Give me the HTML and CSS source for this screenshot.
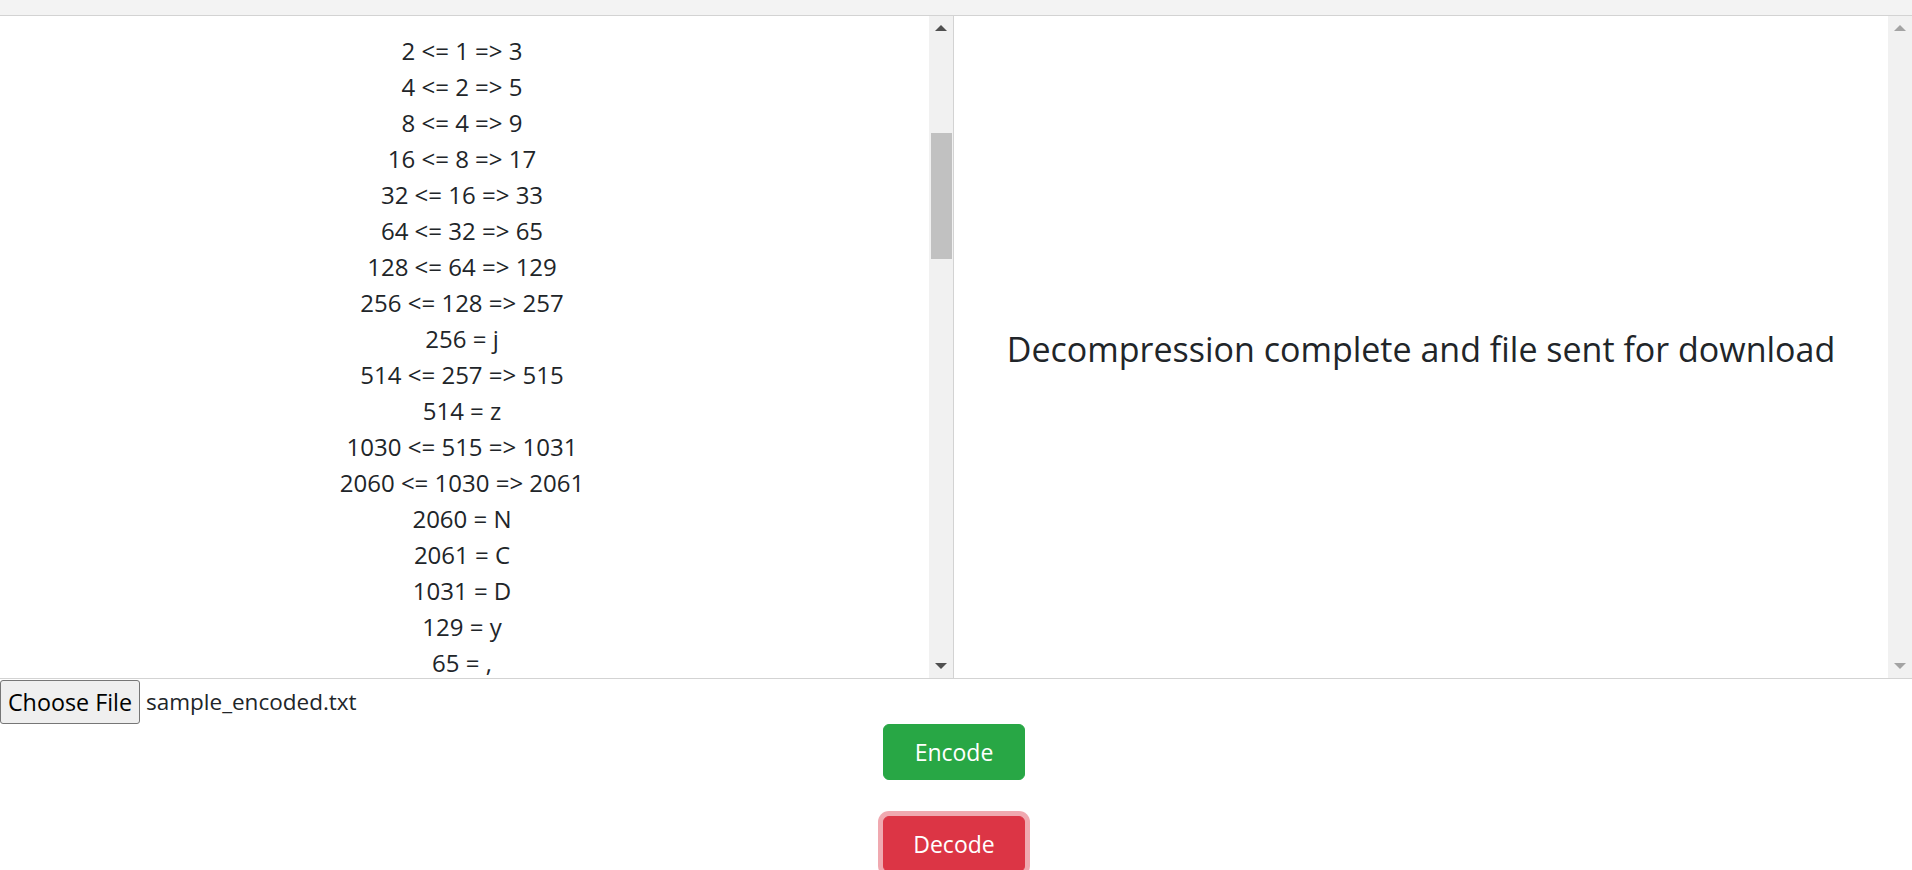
FILE: index.html
```html
<!DOCTYPE html>
<html lang="en">
<head>
<meta charset="utf-8">
<title>Huffman Decoder</title>
<link rel="stylesheet" href="styles.css">
</head>
<body>
<div class="topbar"></div>
<main class="panels">
  <section class="panel panel-log">
    <div class="view log">
      <p class="row">2 &lt;= 1 =&gt; 3</p>
      <p class="row">4 &lt;= 2 =&gt; 5</p>
      <p class="row">8 &lt;= 4 =&gt; 9</p>
      <p class="row">16 &lt;= 8 =&gt; 17</p>
      <p class="row">32 &lt;= 16 =&gt; 33</p>
      <p class="row">64 &lt;= 32 =&gt; 65</p>
      <p class="row">128 &lt;= 64 =&gt; 129</p>
      <p class="row">256 &lt;= 128 =&gt; 257</p>
      <p class="row">256 = j</p>
      <p class="row">514 &lt;= 257 =&gt; 515</p>
      <p class="row">514 = z</p>
      <p class="row">1030 &lt;= 515 =&gt; 1031</p>
      <p class="row">2060 &lt;= 1030 =&gt; 2061</p>
      <p class="row">2060 = N</p>
      <p class="row">2061 = C</p>
      <p class="row">1031 = D</p>
      <p class="row">129 = y</p>
      <p class="row">65 = ,</p>
    </div>
    <div class="scrollbar">
      <div class="sb-btn"><svg width="12" height="6" viewBox="0 0 12 6"><polygon points="0,6 6,0 12,6"/></svg></div>
      <div class="sb-track"><div class="sb-thumb" style="margin-top:93px;height:126px"></div></div>
      <div class="sb-btn"><svg width="12" height="6" viewBox="0 0 12 6"><polygon points="0,0 12,0 6,6"/></svg></div>
    </div>
  </section>
  <section class="panel panel-result">
    <div class="view result">
      <h4 class="result-text">Decompression complete and file sent for download</h4>
    </div>
    <div class="scrollbar scrollbar-disabled">
      <div class="sb-btn"><svg width="12" height="6" viewBox="0 0 12 6"><polygon points="0,6 6,0 12,6"/></svg></div>
      <div class="sb-track"></div>
      <div class="sb-btn"><svg width="12" height="6" viewBox="0 0 12 6"><polygon points="0,0 12,0 6,6"/></svg></div>
    </div>
  </section>
</main>
<div class="controls">
  <div class="file-row">
    <span class="file-btn">Choose File</span>
    <span class="file-name">sample_encoded.txt</span>
  </div>
  <div class="actions">
    <button class="btn btn-encode" type="button">Encode</button>
    <button class="btn btn-decode" type="button">Decode</button>
  </div>
</div>
</body>
</html>
```

FILE: styles.css
```css
* { box-sizing: border-box; }

html, body {
  margin: 0;
  padding: 0;
  background: #fff;
  overflow: hidden;
}

body {
  font-family: "Open Sans", "Noto Sans", sans-serif;
  color: #212529;
  font-size: 24px;
  line-height: 36px;
}

.topbar {
  height: 15px;
  background: #f3f3f3;
}

.panels {
  display: flex;
  height: 664px;
  margin: 0 -1px;
}

.panel {
  display: flex;
  height: 100%;
  border: 1px solid #d3d3d3;
}

.panel-log {
  width: 955px;
  flex: none;
}

.panel-result {
  flex: 1;
  border-left: 0;
}

.view {
  flex: 1;
  min-width: 0;
  overflow: hidden;
}

.log {
  padding-top: 17px;
  padding-right: 5px;
}

.row {
  margin: 0;
  text-align: center;
  font-size: 24px;
  line-height: 36px;
  white-space: pre;
}

.result {
  display: flex;
  align-items: center;
  justify-content: center;
  padding-top: 5px;
}

.result-text {
  margin: 0;
  font-size: 34px;
  font-weight: 400;
  line-height: 1.2;
  text-align: center;
}

/* scrollbar */
.scrollbar {
  flex: none;
  width: 24px;
  display: flex;
  flex-direction: column;
  background: #f1f1f1;
}

.sb-btn {
  height: 24px;
  display: flex;
  align-items: center;
  justify-content: center;
  fill: #505050;
}

.sb-btn svg { display: block; }

.scrollbar-disabled .sb-btn { fill: #a3a3a3; }

.sb-track {
  flex: 1;
}

.sb-thumb {
  margin-left: 2px;
  margin-right: 1px;
  background: #c1c1c1;
}

/* controls */
.controls {
  display: flex;
  flex-direction: column;
}

.file-row {
  display: flex;
  align-items: center;
  height: 45px;
  padding-top: 1px;
  font-size: 22.5px;
}

.file-btn {
  display: inline-flex;
  align-items: center;
  justify-content: center;
  width: 140px;
  height: 44px;
  padding: 0;
  margin-right: 6px;
  background: #efefef;
  border: 1px solid #767676;
  border-radius: 3px;
  color: #000;
  font-size: 23.3px;
}

.file-name {
  color: #212529;
}

.actions {
  display: flex;
  flex-direction: column;
  align-items: center;
  gap: 36px;
  margin-right: 4px;
}

.btn {
  width: 142px;
  height: 56px;
  padding: 0;
  border: 1px solid transparent;
  border-radius: 6px;
  font-family: inherit;
  font-size: 23px;
  line-height: 36px;
  color: #fff;
  cursor: pointer;
}

.btn-encode {
  background: #28a745;
  border-color: #28a745;
}

.btn-decode {
  background: #dc3545;
  border-color: #dc3545;
  box-shadow: 0 0 0 5px rgba(225, 83, 97, 0.5);
}
```
